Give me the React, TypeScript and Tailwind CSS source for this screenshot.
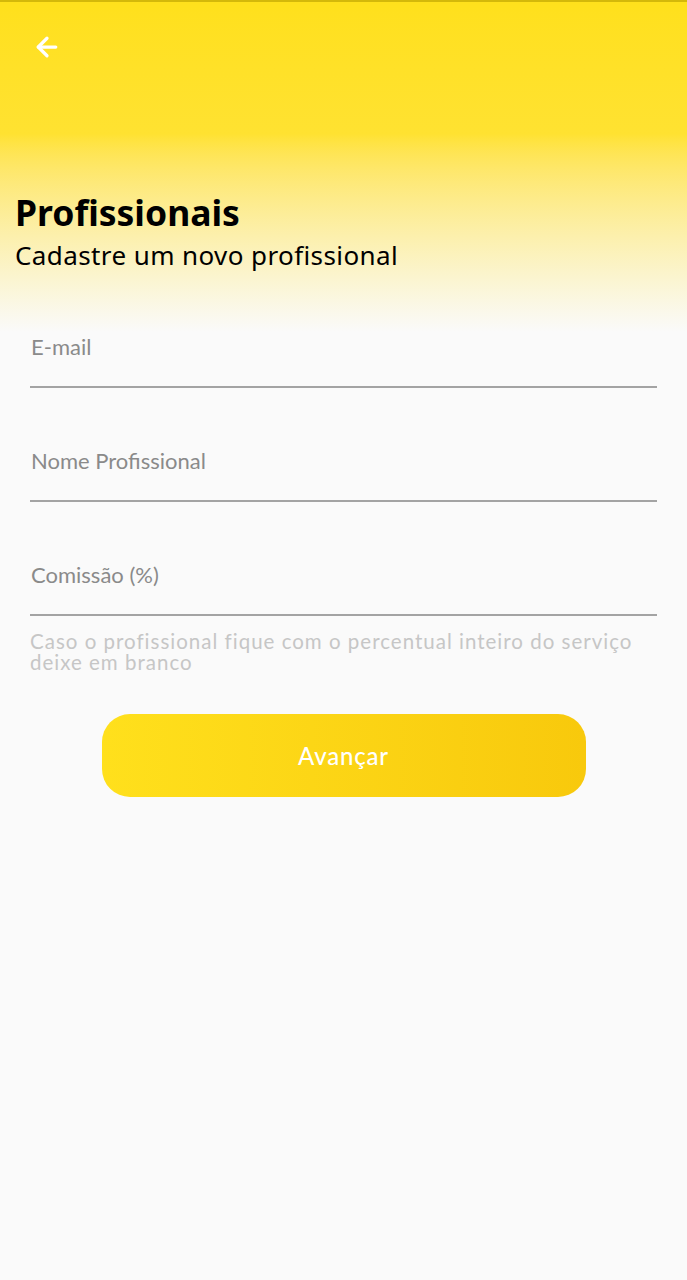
import { ArrowLeft } from "lucide-react";

const fields = ["E-mail", "Nome Profissional", "Comissão (%)"];

export default function App() {
  return (
    <div className="min-h-[1280px] w-full bg-[#fafafa]">
      <div className="h-[332px] border-t-2 border-[#d4b80a] bg-gradient-to-b from-[#ffe01c] via-[#ffe231] via-40% to-[#fafafa] px-[15px] pt-[31px]">
        <button className="ml-[17px] flex h-[28px] w-[30px] items-center justify-center text-white">
          <ArrowLeft className="h-[30px] w-[30px]" strokeWidth={2.6} />
        </button>
        <div className="mt-[128px] font-['Noto_Sans',sans-serif] text-black">
          <h1 className="text-[35.5px] font-bold leading-[46px]">Profissionais</h1>
          <p className="mt-[3px] text-[26px] leading-[34px] tracking-[0.4px]">Cadastre um novo profissional</p>
        </div>
      </div>

      <div className="px-[30px] font-['Lato',sans-serif]">
        <div className="flex flex-col gap-[56px]">
          {fields.map((f, i) => (
            <div key={f} className={`h-[58px] border-b-2 border-[#a3a3a3] pt-[4px] ${i === 0 ? "-mt-[2px]" : ""}`}>
              <label className="block pl-[1px] text-[22px] leading-[26px] text-[#8a8a8a]">{f}</label>
            </div>
          ))}
        </div>
        <p className="mt-[15px] max-w-[610px] text-[20.5px] leading-[21px] tracking-[1px] text-[#c6c6c6]">
          Caso o profissional fique com o percentual inteiro do serviço deixe em branco
        </p>

        <div className="mt-[41px] flex justify-center">
          <button className="h-[83px] w-[484px] rounded-[28px] bg-gradient-to-r from-[#ffe01c] to-[#f8c90c] text-[24px] font-medium tracking-[0.8px] text-white">
            Avançar
          </button>
        </div>
      </div>
    </div>
  );
}
